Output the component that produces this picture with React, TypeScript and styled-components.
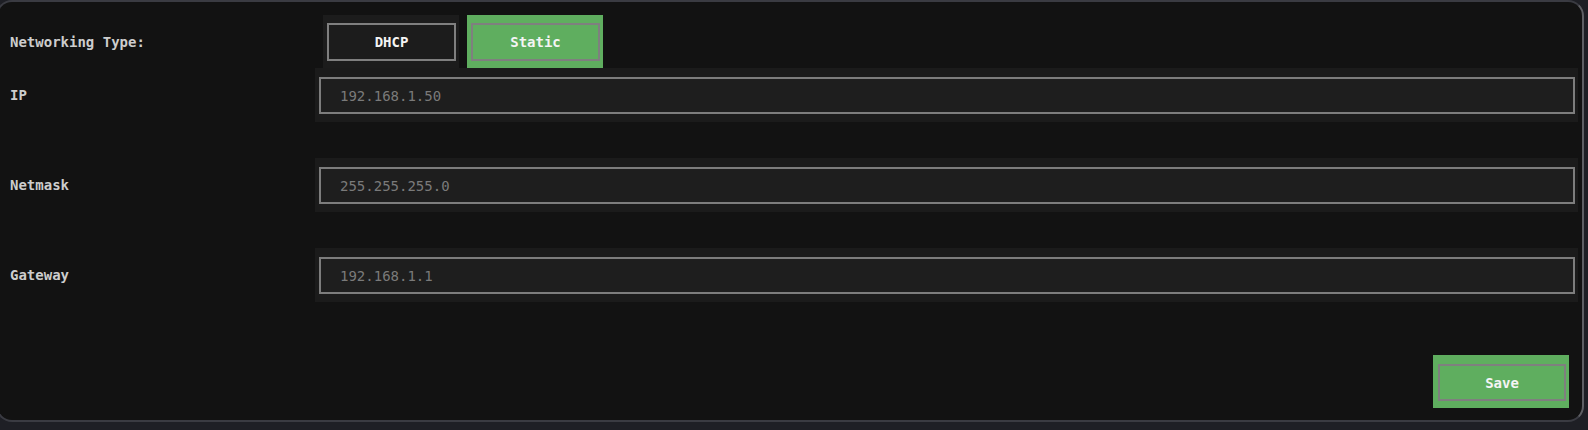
import React, { useState } from "react";
import styled, { createGlobalStyle } from "styled-components";

const GlobalStyle = createGlobalStyle`
  html, body {
    margin: 0;
    padding: 0;
    background: #1e1f25;
    overflow: hidden;
  }
  * {
    box-sizing: border-box;
  }
`;

const Panel = styled.div`
  width: 1588px;
  height: 422px;
  margin-left: -4px;
  padding: 13px 4px 0 12px;
  background: #121212;
  border: 2px solid #3a3b42;
  border-right-color: #5e5f64;
  border-radius: 16px;
  font-family: "DejaVu Sans Mono", "Liberation Mono", monospace;
  font-size: 14px;
`;

const Row = styled.div<{ $gapAfter?: number; $height?: number }>`
  display: grid;
  grid-template-columns: 305px 1fr;
  align-items: center;
  height: ${(p) => p.$height ?? 54}px;
  margin-bottom: ${(p) => p.$gapAfter ?? 0}px;
`;

const Label = styled.label`
  color: #cdcdcd;
  font-weight: bold;
  white-space: pre;
`;

const ToggleGroup = styled.div`
  display: flex;
  gap: 8px;
  padding-left: 8px;
  height: 100%;
`;

const ButtonWrap = styled.div<{ $active?: boolean }>`
  width: 136px;
  height: 53px;
  padding: 8px 3px 7px 4px;
  background: ${(p) => (p.$active ? "#5fae5f" : "#1c1c1c")};
`;

const Button = styled.button<{ $active?: boolean }>`
  display: block;
  width: 100%;
  height: 38px;
  border: 2px solid #7f7f7f;
  background: ${(p) => (p.$active ? "#5fae5f" : "#1c1c1c")};
  color: #f4f4f4;
  font-family: inherit;
  font-size: 14px;
  font-weight: bold;
  cursor: pointer;
  padding: 0;
`;

const FieldWrap = styled.div`
  height: 54px;
  padding: 9px 3px 8px 4px;
  background: #1b1b1b;
`;

const Input = styled.input`
  display: block;
  width: 100%;
  height: 37px;
  padding: 0 0 0 19px;
  border: 2px solid #7d7d7d;
  background: #1e1e1e;
  color: #7a7a7a;
  font-family: inherit;
  font-size: 14px;
  outline: none;
`;

const Footer = styled.div`
  display: flex;
  justify-content: flex-end;
  margin-top: 53px;
  padding-right: 9px;
`;

const SaveWrap = styled(ButtonWrap)`
  padding: 9px 3px 7px 5px;
`;

const SaveButton = styled(Button)`
  height: 37px;
`;

const fields = [
  { label: "IP", value: "192.168.1.50" },
  { label: "Netmask", value: "255.255.255.0" },
  { label: "Gateway", value: "192.168.1.1" },
];

export default function App() {
  const [mode, setMode] = useState<"dhcp" | "static">("static");

  return (
    <>
      <GlobalStyle />
      <Panel>
        <Row $height={53}>
          <Label>Networking Type:</Label>
          <ToggleGroup>
            <ButtonWrap $active={mode === "dhcp"}>
              <Button $active={mode === "dhcp"} onClick={() => setMode("dhcp")}>
                DHCP
              </Button>
            </ButtonWrap>
            <ButtonWrap $active={mode === "static"}>
              <Button
                $active={mode === "static"}
                onClick={() => setMode("static")}
              >
                Static
              </Button>
            </ButtonWrap>
          </ToggleGroup>
        </Row>
        {fields.map((f, i) => (
          <Row key={f.label} $gapAfter={i < fields.length - 1 ? 36 : 0}>
            <Label>{f.label}</Label>
            <FieldWrap>
              <Input defaultValue={f.value} />
            </FieldWrap>
          </Row>
        ))}
        <Footer>
          <SaveWrap $active>
            <SaveButton $active>Save</SaveButton>
          </SaveWrap>
        </Footer>
      </Panel>
    </>
  );
}
